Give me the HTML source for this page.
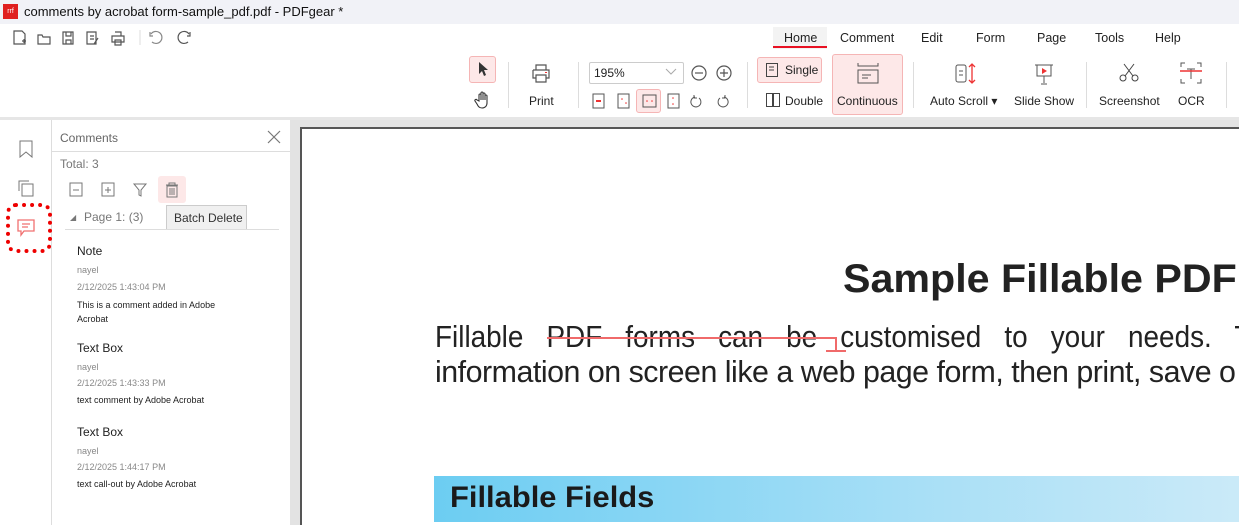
<!DOCTYPE html>
<html><head><meta charset="utf-8"><style>
*{margin:0;padding:0;box-sizing:border-box}
body{width:1239px;height:525px;overflow:hidden;background:#fff;font-family:"Liberation Sans",sans-serif;position:relative;color:#222}
.a{position:absolute}
.tb{font-size:12px;color:#222}
.ic{stroke:#555;fill:none;stroke-width:1.2}
.sep{position:absolute;width:1px;background:#ddd}
.cond{transform-origin:0 0;white-space:nowrap}
</style></head><body>
<div class="a" style="left:0;top:0;width:1239px;height:24px;background:#f1f2f7"></div>
<div class="a" style="left:3px;top:4px;width:15px;height:15px;background:#e02020;color:#fff;font-size:7px;line-height:15px;text-align:center">rrf</div>
<div class="a" style="left:24px;top:4px;font-size:13px;color:#111">comments by acrobat form-sample_pdf.pdf - PDFgear *</div>
<svg class="a" style="left:10px;top:28px" width="185" height="20">
<g class="ic"><path d="M4 3h8l3 3v10H4z"/><path d="M12 13h4M14 11v4"/>
<path d="M28 7h4l1 2h7v7H28z"/><path d="M53 4h10v12H53zM56 4v4h5V4M56 16v-4h5v4"/>
<path d="M77 4h9v12h-9zM80 8h4M80 11h4M84 16l4-6"/><path d="M102 8h12v6h-12zM105 4h6v4M105 12h6v5h-6z"/>
<path d="M143 8h-3v-4M141 6a6 6 0 1 1 1 8" stroke="#888"/><path d="M177 8h3v-4M179 6a6 6 0 1 0 -1 8"/></g>
<line x1="130" y1="2" x2="130" y2="17" stroke="#ddd"/></svg>
<div class="a" style="left:773px;top:27px;width:54px;height:22px;background:#f3f3f3"></div>
<div class="a" style="left:773px;top:46px;width:54px;height:2px;background:#e81123"></div>
<div class="a tb" style="left:784px;top:31px;font-size:12.5px">Home</div>
<div class="a tb" style="left:840px;top:31px;font-size:12.5px">Comment</div>
<div class="a tb" style="left:921px;top:31px;font-size:12.5px">Edit</div>
<div class="a tb" style="left:976px;top:31px;font-size:12.5px">Form</div>
<div class="a tb" style="left:1037px;top:31px;font-size:12.5px">Page</div>
<div class="a tb" style="left:1095px;top:31px;font-size:12.5px">Tools</div>
<div class="a tb" style="left:1155px;top:31px;font-size:12.5px">Help</div>
<div class="a" style="left:469px;top:56px;width:27px;height:27px;background:#fde8e8;border:1px solid #f5b5b5;border-radius:3px"></div>
<svg class="a" style="left:476px;top:61px" width="14" height="16"><path d="M3 1v12l3-3 2 5 2-1-2-5h4z" fill="#333"/></svg>
<svg class="a" style="left:474px;top:91px" width="18" height="18"><path d="M5 10V4a1 1 0 0 1 2 0v5V2a1 1 0 0 1 2 0v7V3a1 1 0 0 1 2 0v6V5a1 1 0 0 1 2 0v7c0 3-2 5-5 5s-4-2-5-4l-2-3a1 1 0 0 1 2-1z" fill="none" stroke="#333" stroke-width="1.1"/></svg>
<div class="sep" style="left:508px;top:62px;height:46px"></div>
<svg class="a" style="left:531px;top:63px" width="20" height="20"><g class="ic" stroke="#444"><path d="M5 7V2h10v5M2 7h16v8h-3M5 15H2V7M5 12h10v7H5z"/></g><rect x="14" y="9" width="2" height="1" fill="#e33"/></svg>
<div class="a tb" style="left:529px;top:94px">Print</div>
<div class="sep" style="left:578px;top:62px;height:46px"></div>
<div class="a" style="left:589px;top:62px;width:95px;height:22px;border:1px solid #ccc;border-radius:2px;font-size:12px;padding:3px 4px">195%</div>
<svg class="a" style="left:665px;top:68px" width="12" height="8"><path d="M1 1l5 5 5-5" stroke="#aaa" fill="none"/></svg>
<svg class="a" style="left:690px;top:64px" width="44" height="18"><g class="ic" stroke="#444"><circle cx="9" cy="9" r="7"/><path d="M5 9h8"/><circle cx="34" cy="9" r="7"/><path d="M30 9h8M34 5v8"/></g></svg>
<div class="a" style="left:636px;top:89px;width:25px;height:24px;background:#fde8e8;border:1px solid #f5b5b5;border-radius:3px"></div>
<svg class="a" style="left:590px;top:92px" width="145" height="18"><g fill="none" stroke="#555">
<rect x="3" y="2" width="11" height="14"/><rect x="28" y="2" width="11" height="14"/><rect x="53" y="3" width="13" height="12"/><rect x="78" y="2" width="11" height="14"/>
<path d="M105 5a5 5 0 1 0 4 1M104 3v3h3"/><path d="M134 5a5 5 0 1 1 -4 1M135 3v3h-3"/></g>
<g fill="#e33"><rect x="6" y="8" width="5" height="2"/><circle cx="32" cy="7" r=".8"/><circle cx="36" cy="11" r=".8"/><circle cx="57" cy="9" r=".8"/><circle cx="62" cy="9" r=".8"/><circle cx="83" cy="6" r=".8"/><circle cx="83" cy="12" r=".8"/></g></svg>
<div class="sep" style="left:747px;top:62px;height:46px"></div>
<div class="a" style="left:757px;top:57px;width:65px;height:26px;background:#fde8e8;border:1px solid #f5b5b5;border-radius:3px"></div>
<svg class="a" style="left:765px;top:62px" width="14" height="16"><rect x="1.5" y="1.5" width="11" height="13" fill="none" stroke="#444"/><path d="M4 5h5M4 8h5" stroke="#444"/></svg>
<div class="a tb" style="left:785px;top:63px">Single</div>
<svg class="a" style="left:765px;top:92px" width="16" height="16"><rect x="1.5" y="1.5" width="6" height="13" fill="none" stroke="#444"/><rect x="8.5" y="1.5" width="6" height="13" fill="none" stroke="#444"/></svg>
<div class="a tb" style="left:785px;top:94px">Double</div>
<div class="a" style="left:832px;top:54px;width:71px;height:61px;background:#fde8e8;border:1px solid #f5b5b5;border-radius:3px"></div>
<svg class="a" style="left:856px;top:62px" width="24" height="22"><g fill="none" stroke="#555"><path d="M2 1v3h20V1"/><rect x="2" y="8" width="20" height="13"/><path d="M6 13h9M6 16h6"/></g></svg>
<div class="a tb" style="left:837px;top:94px">Continuous</div>
<div class="sep" style="left:913px;top:62px;height:46px"></div>
<svg class="a" style="left:954px;top:62px" width="24" height="24"><rect x="2" y="3" width="10" height="17" rx="2" fill="none" stroke="#555"/><path d="M5 9h4M5 13h4" stroke="#555"/><path d="M18 2v19M15 5l3-3 3 3M15 18l3 3 3-3" stroke="#e33" fill="none" stroke-width="1.3"/></svg>
<div class="a tb" style="left:930px;top:94px">Auto Scroll ▾</div>
<svg class="a" style="left:1033px;top:62px" width="22" height="24"><g fill="none" stroke="#555"><path d="M2 3h18M4 3v11h14V3M11 14v7M8 22h6"/></g><path d="M9 6l5 3-5 3z" fill="#e33"/></svg>
<div class="a tb" style="left:1014px;top:94px">Slide Show</div>
<div class="sep" style="left:1086px;top:62px;height:46px"></div>
<svg class="a" style="left:1118px;top:62px" width="22" height="22"><g fill="none" stroke="#444"><circle cx="5" cy="16" r="3"/><circle cx="17" cy="16" r="3"/><path d="M7 14L16 2M15 14L6 2"/></g></svg>
<div class="a tb" style="left:1099px;top:94px">Screenshot</div>
<svg class="a" style="left:1179px;top:61px" width="24" height="24"><g fill="none" stroke="#555"><path d="M2 6V2h4M18 2h4v4M2 18v4h4M22 18v4h-4M8 8h8M12 8v10"/></g><path d="M1 10h22" stroke="#e33" stroke-width="1.5"/></svg>
<div class="a tb" style="left:1178px;top:94px">OCR</div>
<div class="sep" style="left:1226px;top:62px;height:46px"></div>
<div class="a" style="left:0;top:117px;width:1239px;height:3px;background:#e6e6e6"></div>
<div class="a" style="left:51px;top:120px;width:1px;height:405px;background:#ddd"></div>
<svg class="a" style="left:17px;top:139px" width="18" height="20"><path d="M3 2h12v16l-6-5-6 5z" fill="none" stroke="#777"/></svg>
<svg class="a" style="left:16px;top:178px" width="20" height="20"><g fill="none" stroke="#777"><path d="M3 13V3h10"/><rect x="6" y="6" width="11" height="12"/></g></svg>
<div class="a" style="left:6px;top:203px;width:46px;height:50px;border:4px dotted #e00;border-radius:10px"></div>
<svg class="a" style="left:16px;top:218px" width="20" height="20"><path d="M2 2h16v11H8l-3 4v-4H2z" fill="none" stroke="#f07070" stroke-width="1.3"/><path d="M6 6h8M6 9h6" stroke="#f07070" stroke-width="1.3"/></svg>
<div class="a" style="left:60px;top:131px;font-size:12px;color:#666">Comments</div>
<svg class="a" style="left:267px;top:130px" width="14" height="14"><path d="M1 1l12 12M13 1L1 13" stroke="#777" stroke-width="1.2"/></svg>
<div class="a" style="left:52px;top:151px;width:238px;height:1px;background:#ddd"></div>
<div class="a" style="left:60px;top:157px;font-size:12px;color:#777">Total: 3</div>
<div class="a" style="left:158px;top:176px;width:28px;height:27px;background:#fde8e8;border-radius:3px"></div>
<svg class="a" style="left:68px;top:181px" width="115" height="18"><g fill="none" stroke="#777"><rect x="2" y="2" width="12" height="13"/><path d="M5 9h6"/><rect x="34" y="2" width="12" height="13"/><path d="M37 9h6M40 6v6"/><path d="M66 3h12l-5 6v6l-2-1V9z"/><path d="M98 4h12M101 4V2h6v2M99 5h10v11H99zM102 7v7M104 7v7M106 7v7"/></g></svg>
<div class="a" style="left:70px;top:213px;font-size:8px;color:#777">◢</div>
<div class="a" style="left:84px;top:210px;font-size:12px;color:#777">Page 1: (3)</div>
<div class="a" style="left:166px;top:205px;width:81px;height:25px;background:#f0f0f0;border:1px solid #ccc;font-size:12px;color:#333;padding:5px 0 0 7px">Batch Delete</div>
<div class="a" style="left:65px;top:229px;width:214px;height:1px;background:#ddd"></div>
<div class="a" style="left:77px;top:244px;font-size:12px;color:#222">Note</div>
<div class="a" style="left:77px;top:265px;font-size:9px;color:#888">nayel</div>
<div class="a" style="left:77px;top:282px;font-size:9px;color:#888">2/12/2025 1:43:04 PM</div>
<div class="a" style="left:77px;top:298px;font-size:9px;color:#222;line-height:14px">This is a comment added in Adobe<br>Acrobat</div>
<div class="a" style="left:77px;top:341px;font-size:12px;color:#222">Text Box</div>
<div class="a" style="left:77px;top:362px;font-size:9px;color:#888">nayel</div>
<div class="a" style="left:77px;top:378px;font-size:9px;color:#888">2/12/2025 1:43:33 PM</div>
<div class="a" style="left:77px;top:395px;font-size:9px;color:#222">text comment by Adobe Acrobat</div>
<div class="a" style="left:77px;top:425px;font-size:12px;color:#222">Text Box</div>
<div class="a" style="left:77px;top:446px;font-size:9px;color:#888">nayel</div>
<div class="a" style="left:77px;top:462px;font-size:9px;color:#888">2/12/2025 1:44:17 PM</div>
<div class="a" style="left:77px;top:479px;font-size:9px;color:#222">text call-out by Adobe Acrobat</div>
<div class="a" style="left:290px;top:120px;width:949px;height:405px;background:#e3e3e3"></div>
<div class="a" style="left:300px;top:127px;width:939px;height:398px;background:#fff;border-left:2px solid #555;border-top:2px solid #555;overflow:hidden">
 <div class="a cond" style="left:541px;top:128px;font-size:40px;font-weight:bold;color:#222;transform:scaleX(1.03)">Sample Fillable PDF</div>
 <div class="a cond" style="left:133px;top:190px;font-size:31px;color:#222;transform:scaleX(.9);word-spacing:17px">Fillable PDF forms can be customised to your needs. T</div>
 <div class="a cond" style="left:133px;top:225px;font-size:31px;color:#222;transform:scaleX(.98);letter-spacing:-.5px">information on screen like a web page form, then print, save o</div>
 <div class="a" style="left:245px;top:208px;width:290px;height:2px;background:#f06a6a"></div>
 <div class="a" style="left:533px;top:208px;width:2px;height:14px;background:#f06a6a"></div>
 <div class="a" style="left:524px;top:221px;width:20px;height:2px;background:#f06a6a"></div>
 <div class="a" style="left:132px;top:347px;width:810px;height:46px;background:linear-gradient(90deg,#6ccdf2,#a8dff6 60%,#cbeaf8)"></div>
 <div class="a cond" style="left:148px;top:352px;font-size:30px;font-weight:bold;color:#1a1a1a;transform:scaleX(1.03)">Fillable Fields</div>
</div>
</body></html>
